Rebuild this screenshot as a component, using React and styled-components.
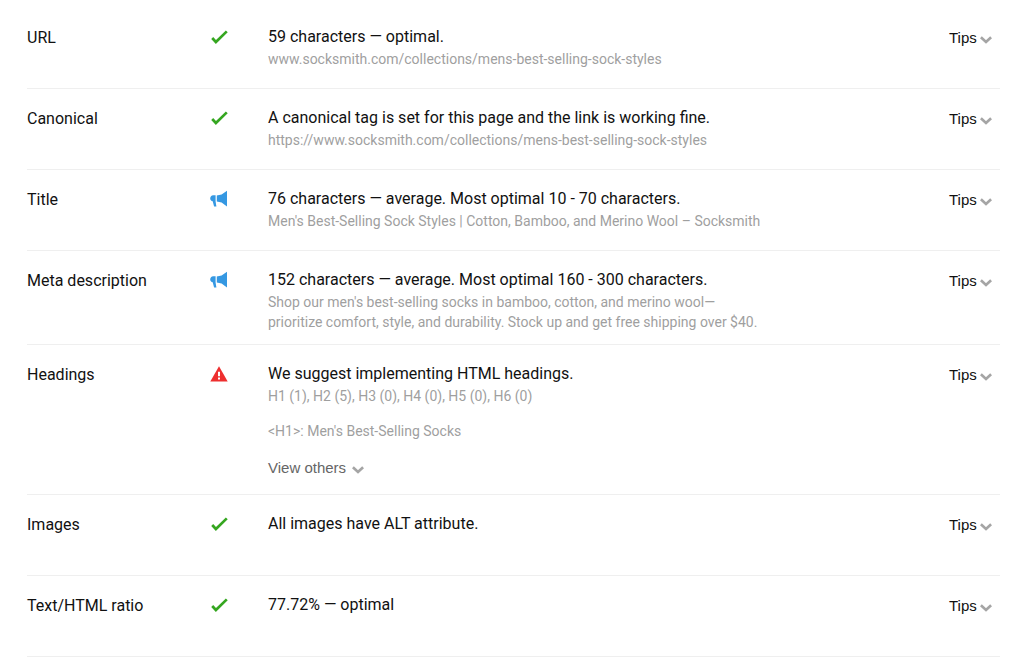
import { createGlobalStyle, styled } from "styled-components";

const GlobalStyle = createGlobalStyle`
    *,
    *::before,
    *::after {
        box-sizing: border-box;
    }

    body {
        margin: 0;
        background-color: #fff;
        color: #111;
        font-family: Roboto, "Liberation Sans", sans-serif;
        font-size: 16px;
        line-height: 24px;
    }
`;

const Report = styled.main`
    padding: 8px 24px 8px 27px;
`;

const ChecksTable = styled.table`
    width: 100%;
    border-collapse: separate;
    border-spacing: 0;
    table-layout: fixed;
`;

const Column = styled.col`
    width: ${(props) => props.$width || "auto"};
`;

const Cell = styled.td`
    height: 81px;
    padding: 17px 0 12px;
    border-bottom: 1px solid #efefef;
    vertical-align: top;
    text-align: left;
`;

const NameCell = styled(Cell)`
    padding-top: 18px;
    font-weight: 400;
`;

const StatusIcon = styled.svg`
    display: block;
    width: 18px;
    height: 18px;
    margin-top: 3px;
`;

const Note = styled.p`
    max-width: 500px;
    margin: 0 0 ${(props) => (props.$spaced ? "15px" : "0")};

    color: #9f9f9f;
    font-size: 14px;
    line-height: 20px;
    white-space: pre-line;
`;

const Message = styled.p`
    margin: 0;
`;

const Toggle = styled.button`
    display: flex;
    align-items: center;
    gap: ${(props) => (props.$muted ? "6px" : "3px")};

    margin-bottom: 2px;
    padding: 0;
    border: none;
    background: none;
    color: ${(props) => (props.$muted ? "#666" : "#111")};
    font-family: "Liberation Sans", Arial, sans-serif;
    font-size: 15px;
    line-height: 24px;
    cursor: pointer;
`;

const Arrow = styled.svg`
    width: 12px;
    height: 8px;
    margin-top: 4px;
`;

const checks = [
    {
        name: "URL",
        status: "ok",
        message: "59 characters — optimal.",
        notes: ["www.socksmith.com/collections/mens-best-selling-sock-styles"],
    },
    {
        name: "Canonical",
        status: "ok",
        message:
            "A canonical tag is set for this page and the link is working fine.",
        notes: [
            "https://www.socksmith.com/collections/mens-best-selling-sock-styles",
        ],
    },
    {
        name: "Title",
        status: "notice",
        message: "76 characters — average. Most optimal 10 - 70 characters.",
        notes: [
            "Men's Best-Selling Sock Styles | Cotton, Bamboo, and Merino Wool – Socksmith",
        ],
    },
    {
        name: "Meta description",
        status: "notice",
        message: "152 characters — average. Most optimal 160 - 300 characters.",
        notes: [
            "Shop our men's best-selling socks in bamboo, cotton, and merino wool—\nprioritize comfort, style, and durability. Stock up and get free shipping over $40.",
        ],
    },
    {
        name: "Headings",
        status: "error",
        message: "We suggest implementing HTML headings.",
        notes: [
            "H1 (1), H2 (5), H3 (0), H4 (0), H5 (0), H6 (0)",
            "<H1>: Men's Best-Selling Socks",
        ],
        expandable: true,
    },
    {
        name: "Images",
        status: "ok",
        message: "All images have ALT attribute.",
        notes: [],
    },
    {
        name: "Text/HTML ratio",
        status: "ok",
        message: "77.72% — optimal",
        notes: [],
    },
];

function Chevron() {
    return (
        <Arrow viewBox="0 0 12 8" aria-hidden="true">
            <path
                d="M.9 1.3 6 6l5.1-4.7"
                fill="none"
                stroke="#a5a5a5"
                strokeWidth="2.7"
            />
        </Arrow>
    );
}

function Status({ type }) {
    if (type === "ok") {
        return (
            <StatusIcon viewBox="0 0 18 18" role="img" aria-label="Passed">
                <path
                    d="m2.2 10 3.7 4L16.8 3.4"
                    fill="none"
                    stroke="#35a620"
                    strokeWidth="2.7"
                />
            </StatusIcon>
        );
    }

    if (type === "notice") {
        return (
            <StatusIcon viewBox="0 0 18 18" role="img" aria-label="Notice">
                <path
                    d="M17 .8v15.6l-5.4-3.8-4.8-1V5.4l4.8-1zM5.6 5.3v6.3l.8 5H4.1l-1.4-5.3C1.2 10.9.2 9.9.2 8.4s1.2-3 3-3.1z"
                    fill="#3598e2"
                />
            </StatusIcon>
        );
    }

    return (
        <StatusIcon viewBox="0 0 18 18" role="img" aria-label="Error">
            <path d="M9 1.2 17.7 16.5H.3z" fill="#ee2f2f" />
            <path d="M8 6.7h2v4.5H8zM8 12.6h2v2H8z" fill="#fff" />
        </StatusIcon>
    );
}

function CheckRow({ check }) {
    const { name, status, message, notes, expandable } = check;

    return (
        <tr>
            <NameCell as="th" scope="row">
                {name}
            </NameCell>
            <Cell>
                <Status type={status} />
            </Cell>
            <Cell>
                <Message>{message}</Message>
                {notes.map((note) => (
                    <Note key={note} $spaced={expandable}>
                        {note}
                    </Note>
                ))}
                {expandable && (
                    <Toggle type="button" $muted>
                        View others
                        <Chevron />
                    </Toggle>
                )}
            </Cell>
            <NameCell>
                <Toggle type="button">
                    Tips
                    <Chevron />
                </Toggle>
            </NameCell>
        </tr>
    );
}

function App() {
    return (
        <>
            <GlobalStyle />
            <Report>
                <ChecksTable>
                    <colgroup>
                        <Column $width="183px" />
                        <Column $width="58px" />
                        <Column />
                        <Column $width="51px" />
                    </colgroup>
                    <tbody>
                        {checks.map((check) => (
                            <CheckRow key={check.name} check={check} />
                        ))}
                    </tbody>
                </ChecksTable>
            </Report>
        </>
    );
}

export default App;
